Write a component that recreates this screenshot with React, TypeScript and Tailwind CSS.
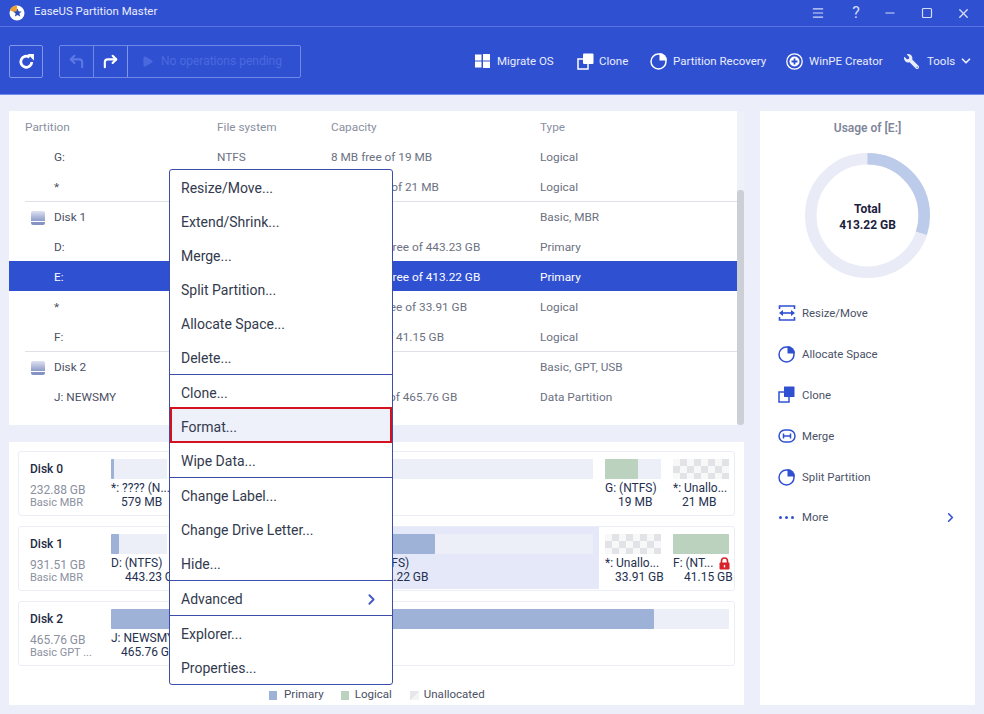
import { ChevronDown, ChevronRight, CornerUpLeft, CornerUpRight, Menu, Minus, Play, Square, X } from 'lucide-react'
import { FaWrench } from 'react-icons/fa'

const BLUE = '#3050d2'

function Logo() {
  return (
    <svg width="16" height="16" viewBox="0 0 16 16" className="mr-[9px]">
      <circle cx="8" cy="8" r="7.5" fill="#fff" />
      <path d="M8 .5A7.5 7.5 0 0 0 .9 5.6L8 8z" fill="#f0a030" />
      <path d="M8.5 3.5l1.2 2.9 3 .2-2.3 2 .8 3-2.7-1.6-2.6 1.6.7-3-2.3-2 3-.2z" fill="#2d4bb8" />
    </svg>
  )
}

function PieIcon({ color, size = 18 }: { color: string; size?: number }) {
  return (
    <svg width={size} height={size} viewBox="0 0 18 18">
      <circle cx="8.5" cy="9.5" r="7.5" fill="none" stroke={color} strokeWidth="1.5" />
      <path d="M9.5 1a7.5 7.5 0 0 1 7.5 7.5H9.5z" fill={color} />
    </svg>
  )
}

function CloneIcon({ color, solid }: { color: string; solid?: boolean }) {
  return (
    <svg width="17" height="17" viewBox="0 0 17 17">
      <rect x="1" y="6" width="10" height="10" fill="none" stroke={color} strokeWidth="1.5" />
      <rect x="6" y="0.5" width="10.5" height="10.5" rx={solid ? 0.5 : 1} fill={color} />
    </svg>
  )
}

function ResizeIcon() {
  return (
    <svg width="18" height="16" viewBox="0 0 18 16" fill="none" stroke={BLUE}>
      <path d="M1.5 4V1h15v3M1.5 12v3h15v-3" strokeWidth="1.6" />
      <path d="M3 8h12" strokeWidth="1.6" />
      <path d="M1 8l4-3v6zM17 8l-4-3v6z" fill={BLUE} stroke="none" />
    </svg>
  )
}

function MergeIcon() {
  return (
    <svg width="18" height="14" viewBox="0 0 18 14" fill="none" stroke={BLUE} strokeWidth="1.5">
      <rect x="1" y="1" width="16" height="12" rx="6" />
      <path d="M5.5 4.5v5M12.5 4.5v5M5.5 7h7" />
    </svg>
  )
}

function RefreshIcon() {
  return (
    <svg width="17" height="17" viewBox="0 0 16 16" fill="none">
      <path d="M13 8.5A5.2 5.2 0 1 1 10.8 4" stroke="#fff" strokeWidth="2.6" />
      <path d="M9 1h6v6z" fill="#fff" />
    </svg>
  )
}

function DiskIcon() {
  return (
    <div className="flex h-[14px] w-[14px] flex-col overflow-hidden rounded-[2px]">
      <div className="h-[10px] bg-linear-to-b from-[#dfe2f0] to-[#8e9bc9]" />
      <div className="mt-px flex-1 bg-[#8592c4]" />
    </div>
  )
}

function LockIcon() {
  return (
    <svg width="11" height="13" viewBox="0 0 11 13" className="ml-[6px]">
      <path d="M2.5 6V4a3 3 0 0 1 6 0v2" fill="none" stroke="#d8232a" strokeWidth="1.6" />
      <rect x="0.5" y="5.5" width="10" height="7" rx="1" fill="#d8232a" />
      <rect x="4.8" y="8" width="1.4" height="2.4" fill="#fff" />
    </svg>
  )
}

type Row = { name: string; fs?: string; cap?: string; type: string; disk?: boolean; selected?: boolean }

const rows: Row[] = [
  { name: 'G:', fs: 'NTFS', cap: '8 MB free of 19 MB', type: 'Logical' },
  { name: '*', cap: '21 MB free of 21 MB', type: 'Logical' },
  { name: 'Disk 1', type: 'Basic, MBR', disk: true },
  { name: 'D:', cap: '391.42 GB free of 443.23 GB', type: 'Primary' },
  { name: 'E:', cap: '345.19 GB free of 413.22 GB', type: 'Primary', selected: true },
  { name: '*', cap: '33.91 GB free of 33.91 GB', type: 'Logical' },
  { name: 'F:', cap: '0 GB free of 41.15 GB', type: 'Logical' },
  { name: 'Disk 2', type: 'Basic, GPT, USB', disk: true },
  { name: 'J: NEWSMY', cap: '60 GB free of 465.76 GB', type: 'Data Partition' },
]

function PartitionTable() {
  return (
    <div className="flex h-[314px] text-[11.8px]">
      <div className="flex-1 bg-white">
        <div className="grid h-[30px] grid-cols-[192px_114px_209px_1fr] items-center pl-4 pt-[4px] text-[#8a8f9f]">
          <span>Partition</span>
          <span>File system</span>
          <span>Capacity</span>
          <span>Type</span>
        </div>
        {rows.map((r, i) => (
          <div
            key={i}
            className={
              'h-[30px] ' + (r.selected ? 'bg-[#3050d2] text-white' : 'text-[#6c7182]')
            }
          >
            <div
              className={
                'ml-4 grid h-full grid-cols-[192px_114px_209px_1fr] items-center ' +
                (r.disk ? 'border-t border-[#dfe1e8] pt-[3px]' : 'pt-[4px]')
              }
            >
              <span className="flex items-center pl-[6px]">
                <span className="w-[23px]">{r.disk && <DiskIcon />}</span>
                <span className={r.selected ? '' : 'text-[#4b5064]'}>{r.name}</span>
              </span>
              <span>{r.fs}</span>
              <span>{r.cap}</span>
              <span>{r.type}</span>
            </div>
          </div>
        ))}
      </div>
      <div className="flex w-[7px] flex-col justify-end bg-[#eff1f8]">
        <div className="h-[235px] rounded-[3px] bg-[#cdcfd6]" />
      </div>
    </div>
  )
}

type Part = {
  w: number
  bar: number
  fill?: number
  color?: string
  free?: boolean
  label?: string
  size?: string
  sizeAt: number
  labelAt?: number
  selected?: boolean
  lock?: boolean
}

const PRIMARY = '#9db2d6'
const LOGICAL = '#bad2be'

const disks: { name: string; size: string; kind: string; parts: Part[] }[] = [
  {
    name: 'Disk 0',
    size: '232.88 GB',
    kind: 'Basic MBR',
    parts: [
      { w: 68, bar: 56, fill: 3, color: PRIMARY, label: '*: ???? (N...', size: '579 MB', sizeAt: 10 },
      { w: 426, bar: 414, fill: 0, sizeAt: 0 },
      { w: 68, bar: 56, fill: 33, color: LOGICAL, label: 'G: (NTFS)', size: '19 MB', sizeAt: 13 },
      { w: 67, bar: 56, free: true, label: '*: Unallo...', size: '21 MB', sizeAt: 9 },
    ],
  },
  {
    name: 'Disk 1',
    size: '931.51 GB',
    kind: 'Basic MBR',
    parts: [
      { w: 68, bar: 56, fill: 8, color: PRIMARY, label: 'D: (NTFS)', size: '443.23 GB', sizeAt: 14 },
      { w: 426, bar: 414, fill: 256, color: PRIMARY, label: 'E: (NTFS)', labelAt: 180, size: '413.22 GB', sizeAt: 194, selected: true },
      { w: 68, bar: 56, free: true, label: '*: Unallo...', size: '33.91 GB', sizeAt: 10 },
      { w: 67, bar: 56, fill: 56, color: LOGICAL, label: 'F: (NT...', size: '41.15 GB', sizeAt: 11, lock: true },
    ],
  },
  {
    name: 'Disk 2',
    size: '465.76 GB',
    kind: 'Basic GPT ...',
    parts: [
      { w: 629, bar: 618, fill: 543, color: PRIMARY, label: 'J: NEWSMY', size: '465.76 GB', sizeAt: 10 },
    ],
  },
]

function Checker({ className }: { className: string }) {
  return (
    <div
      className={
        'bg-[conic-gradient(#e2e3e6_25%,#f8f8f9_0_50%,#e2e3e6_0_75%,#f8f8f9_0)] bg-[length:14px_14px] ' + className
      }
    />
  )
}

function DiskMap() {
  return (
    <div className="flex flex-1 flex-col bg-white pl-[9px] pt-[9px]">
      <div className="flex flex-col gap-[10px]">
        {disks.map((d) => (
          <div key={d.name} className="flex h-[65px] w-[717px] rounded-[3px] border border-[#eceef5]">
            <div className="w-[86px] shrink-0 pl-[11px] pt-[9px]">
              <div className="font-medium leading-[17px] text-[#1f2a44]">{d.name}</div>
              <div className="mt-[6px] leading-[12px] text-[#8c90a0]">{d.size}</div>
              <div className="text-[11px] leading-[13px] text-[#8c90a0]">{d.kind}</div>
            </div>
            <div className="flex">
              {d.parts.map((p, i) => (
                <div
                  key={i}
                  className={'pl-[6px] pt-[7px] ' + (p.selected ? 'mb-px bg-[#e4e8f9]' : '')}
                  style={{ width: p.w }}
                >
                  {p.free ? (
                    <Checker className="h-[20px] w-[56px]" />
                  ) : (
                    <div className="h-[20px] bg-[#eceef8]" style={{ width: p.bar }}>
                      <div className="h-full rounded-[1px]" style={{ width: p.fill, backgroundColor: p.color }} />
                    </div>
                  )}
                  <div
                    className="flex h-[18px] items-center whitespace-nowrap text-[#24304f]"
                    style={{ paddingLeft: p.labelAt ?? 0 }}
                  >
                    {p.label}
                    {p.lock && <LockIcon />}
                  </div>
                  <div className="-mt-px h-[13px] whitespace-nowrap leading-[13px] text-[#24304f]" style={{ paddingLeft: p.sizeAt }}>
                    {p.size}
                  </div>
                </div>
              ))}
            </div>
          </div>
        ))}
      </div>
      <div className="mt-[21px] flex h-[16px] items-center pl-[251px] text-[11.5px] text-[#4b5064]">
        <span className="h-[9px] w-[8px] bg-[#9db2d6]" />
        <span className="ml-[7px]">Primary</span>
        <span className="ml-[17px] h-[9px] w-[8px] bg-[#bad2be]" />
        <span className="ml-[6px]">Logical</span>
        <span className="ml-[18px] h-[9px] w-[9px] bg-[linear-gradient(135deg,#e6e7ea_50%,#f3f4f6_50%)]" />
        <span className="ml-[5px]">Unallocated</span>
      </div>
    </div>
  )
}

function ContextMenu() {
  const groups = [
    ['Resize/Move...', 'Extend/Shrink...', 'Merge...', 'Split Partition...', 'Allocate Space...', 'Delete...'],
    ['Clone...', 'Format...', 'Wipe Data...'],
    ['Change Label...', 'Change Drive Letter...', 'Hide...'],
    ['Advanced'],
    ['Explorer...', 'Properties...'],
  ]
  return (
    <div className="absolute left-[169px] top-[169px] z-10 w-[224px] rounded-[3px] border border-[#3c4ea8] bg-white text-[14px] text-[#333a4d]">
      {groups.map((g, i) => (
        <div key={i} className={i > 0 ? 'border-t border-[#3c4ea8]' : ''}>
          {g.map((item) => (
            <div
              key={item}
              className={
                'relative flex h-[34px] items-center justify-between pl-[11px] pr-[12px] pt-[3px] ' +
                (item === 'Format...' ? 'bg-[#eef0fa]' : '')
              }
            >
              {item === 'Format...' && (
                <div className="absolute -top-[2px] bottom-0 left-0 right-0 border-2 border-[#d4111e]" />
              )}
              <span className="relative">{item}</span>
              {item === 'Advanced' && <ChevronRight size={17} strokeWidth={2.6} color="#4258c0" />}
            </div>
          ))}
        </div>
      ))}
    </div>
  )
}

function UsagePanel() {
  const actions = [
    { icon: <ResizeIcon />, label: 'Resize/Move' },
    { icon: <PieIcon color={BLUE} />, label: 'Allocate Space' },
    { icon: <CloneIcon color={BLUE} solid />, label: 'Clone' },
    { icon: <MergeIcon />, label: 'Merge' },
    { icon: <PieIcon color={BLUE} />, label: 'Split Partition' },
  ]
  return (
    <div className="ml-4 flex w-[215px] flex-col bg-white">
      <div className="mt-[8px] text-center font-semibold leading-[18px] text-[#80869a]">Usage of [E:]</div>
      <div className="relative ml-[45px] mt-[16px] h-[125px] w-[125px]">
        <svg width="125" height="125" viewBox="0 0 125 125" className="-rotate-90">
          <circle cx="62.5" cy="62.5" r="56.7" fill="none" stroke="#e9ecf7" strokeWidth="11.6" />
          <circle cx="62.5" cy="62.5" r="56.7" fill="none" stroke="#bccbe9" strokeWidth="11.6" strokeDasharray="107 400" />
        </svg>
        <div className="absolute inset-0 flex flex-col items-center justify-center pt-[2px] font-bold leading-[16px] text-[#1c2140]">
          <span>Total</span>
          <span>413.22 GB</span>
        </div>
      </div>
      <div className="mt-[14px] flex flex-col pl-[18px] text-[11.4px] text-[#4b5268]">
        {actions.map((a) => (
          <div key={a.label} className="flex h-[41px] items-center">
            <span className="flex w-[24px] items-center">{a.icon}</span>
            <span className="pt-[2px]">{a.label}</span>
          </div>
        ))}
        <div className="flex h-[40px] items-center">
          <span className="flex w-[24px] items-center gap-[3px] pl-px">
            <i className="h-[3px] w-[3px] rounded-full bg-[#3050d2]" />
            <i className="h-[3px] w-[3px] rounded-full bg-[#3050d2]" />
            <i className="h-[3px] w-[3px] rounded-full bg-[#3050d2]" />
          </span>
          <span className="w-[141px] pt-[2px]">More</span>
          <ChevronRight size={15} strokeWidth={2.6} color={BLUE} />
        </div>
      </div>
    </div>
  )
}

function ToolItem({ icon, label, w, gap }: { icon: React.ReactNode; label: string; w: number; gap: number }) {
  return (
    <div className="flex items-center" style={{ width: w }}>
      <span className="flex shrink-0" style={{ width: gap }}>{icon}</span>
      <span className="pt-[2px]">{label}</span>
    </div>
  )
}

function Header() {
  return (
    <div className="h-[95px] border-b border-[#6f8ae8] bg-[#3050d2] text-white">
      <div className="flex h-[27px] items-center border-b border-[#5874e4] pl-[9px] pr-[13px]">
        <Logo />
        <span className="pb-[2px] text-[11.4px] text-[#e8ecfb]">EaseUS Partition Master</span>
        <div className="ml-auto flex items-center text-[#d5dcf7]">
          <Menu size={14} strokeWidth={2} />
          <span className="ml-[24px] w-[14px] text-center text-[16px] leading-none">?</span>
          <Minus size={14} strokeWidth={2} className="ml-[20px]" />
          <Square size={12} strokeWidth={2.4} className="ml-[24px]" />
          <X size={15} strokeWidth={2.2} className="ml-[23px]" />
        </div>
      </div>
      <div className="flex h-[67px] items-center pl-[9px] pt-px">
        <div className="flex h-[33px] w-[34px] items-center justify-center rounded-[2px] border border-[#7f96ea]">
          <RefreshIcon />
        </div>
        <div className="ml-[16px] flex h-[33px] w-[242px] rounded-[2px] border border-[#6f88e6]">
          <div className="flex w-[34px] items-center justify-center border-r border-[#6f88e6]">
            <CornerUpLeft size={17} strokeWidth={3} color="#5b78e6" />
          </div>
          <div className="flex w-[34px] items-center justify-center border-r border-[#7f96ea]">
            <CornerUpRight size={17} strokeWidth={3} color="#fff" />
          </div>
          <div className="flex items-center pl-[13px] text-[#4a69de]">
            <Play size={13} fill="#4a69de" strokeWidth={1} />
            <span className="ml-[7px]">No operations pending</span>
          </div>
        </div>
        <div className="ml-[174px] flex items-center text-[11.5px] text-[#e8ecfb]">
          <ToolItem
            w={102}
            gap={22}
            label="Migrate OS"
            icon={
              <svg width="15" height="14" viewBox="0 0 15 14" fill="#fff">
                <rect x="0" y="0.5" width="6.5" height="6" />
                <rect x="8" y="0" width="7" height="6.5" />
                <rect x="0" y="7.5" width="6.5" height="6" />
                <rect x="8" y="7.5" width="7" height="6.5" />
              </svg>
            }
          />
          <ToolItem w={73} gap={22} label="Clone" icon={<CloneIcon color="#fff" />} />
          <ToolItem w={136} gap={23} label="Partition Recovery" icon={<PieIcon color="#fff" />} />
          <ToolItem
            w={118}
            gap={23}
            label="WinPE Creator"
            icon={
              <svg width="17" height="17" viewBox="0 0 17 17">
                <circle cx="8.5" cy="8.5" r="7.7" fill="none" stroke="#fff" strokeWidth="1.3" />
                <circle cx="8.5" cy="8.5" r="5" fill="#fff" />
                <path d="M8.5 5.5v6M5.5 8.5h6" stroke="#3050d2" strokeWidth="1.8" />
              </svg>
            }
          />
          <ToolItem w={55} gap={23} label="Tools" icon={<FaWrench size={15} className="-scale-x-100" />} />
          <ChevronDown size={14} strokeWidth={3} />
        </div>
      </div>
    </div>
  )
}

export default function App() {
  return (
    <div className="relative flex h-[714px] w-[984px] flex-col overflow-hidden bg-[#eceff9] font-['Roboto',sans-serif] text-[12px]">
      <Header />
      <div className="flex flex-1 pb-[9px] pl-[9px] pr-[9px] pt-4">
        <div className="flex w-[735px] flex-col gap-[17px]">
          <PartitionTable />
          <DiskMap />
        </div>
        <UsagePanel />
      </div>
      <ContextMenu />
    </div>
  )
}
